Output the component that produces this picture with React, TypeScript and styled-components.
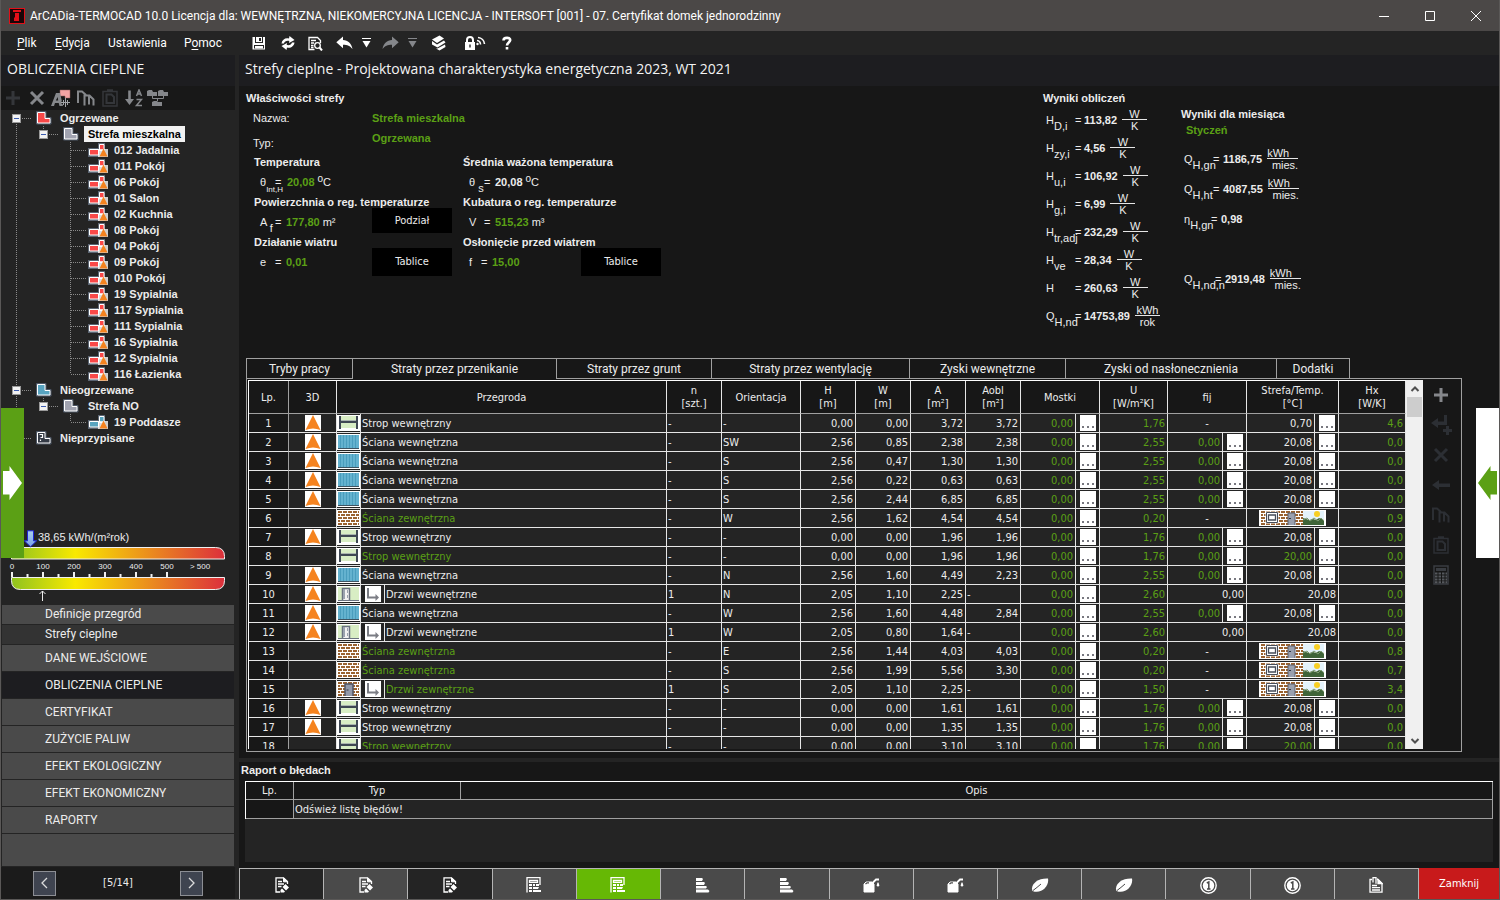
import React from "react";
import styled, { createGlobalStyle, css } from "styled-components";

const arial = `"Liberation Sans", Arial, sans-serif`;
const tahoma = `"DejaVu Sans Condensed", Tahoma, sans-serif`;
const segoe = `"Open Sans", "Segoe UI", sans-serif`;
const ui = `Roboto, "Segoe UI", sans-serif`;

const green = "#5ba015";
const textColor = "#ececec";
const line = "#a0a0a0";
const strong = "#e6e6e6";

const GlobalStyle = createGlobalStyle`
  *, *::before, *::after { box-sizing: border-box; }
  html, body { margin: 0; background: #242424; }
  body { font: 11px/16px ${arial}; color: ${textColor}; overflow: hidden; }
  button { font: inherit; color: inherit; background: none; border: 0; padding: 0; margin: 0; cursor: pointer; }
  svg { display: block; flex: none; }
`;

/* ---------- window frame ---------- */

const Window = styled.div`
  position: relative;
  display: flex;
  flex-direction: column;
  height: 100vh;
  border: 1px solid #5a5857;
  border-top: 0;
  background: #242424;
`;

const TitleBar = styled.header`
  display: flex;
  align-items: center;
  height: 31px;
  flex: none;
  padding-left: 8px;
  background: #4b4847;
  color: #fff;
  font: 12px/16px ${ui};
`;

const TitleText = styled.h1`
  margin: 0 auto 0 5px;
  font: inherit;
  white-space: nowrap;
`;

const CaptionButton = styled.button`
  display: grid;
  place-items: center;
  width: 46px;
  height: 31px;
`;

const MenuBar = styled.nav`
  display: flex;
  align-items: center;
  height: 24px;
  flex: none;
  padding-left: 16px;
  color: #fff;
  font: 12px/16px ${ui};
`;

const MenuItem = styled.button<{ $w: number }>`
  width: ${(p) => p.$w}px;
  text-align: left;
  u { text-underline-offset: 2px; }
`;

const IconButton = styled.button<{ $w?: number; $h?: number }>`
  display: grid;
  place-items: center;
  width: ${(p) => p.$w ?? 24}px;
  height: ${(p) => p.$h ?? 24}px;
`;

const Body = styled.div`
  display: flex;
  flex: 1;
  min-height: 0;
`;

const PanelHeading = styled.h2`
  height: 31px;
  flex: none;
  margin: 0;
  padding-left: 6px;
  background: #1d1d20;
  color: #f4f4f4;
  font: 14px/28px ${segoe};
  white-space: nowrap;
`;

/* ---------- sidebar ---------- */

const Sidebar = styled.aside`
  display: flex;
  flex-direction: column;
  width: 238px;
  flex: none;
  padding-right: 4px;
`;

const TreeTools = styled.div`
  display: flex;
  align-items: center;
  height: 24px;
  flex: none;
  background: #181818;
`;

const Tree = styled.ul`
  flex: 1;
  min-height: 0;
  margin: 0;
  padding: 0;
  list-style: none;
  overflow: hidden;
`;

const TreeRow = styled.li<{ $selected?: boolean }>`
  display: flex;
  align-items: center;
  height: 16px;
  font-weight: bold;
  white-space: nowrap;
  span {
    padding: 0 4px;
    ${(p) => p.$selected && css`background: #f2f2f2; color: #000;`}
  }
`;

const Gap = styled.i<{ $w?: number }>`
  width: ${(p) => p.$w ?? 5}px;
`;

const Gauge = styled.section`
  flex: none;
  height: 75px;
  padding: 0 10px;
  svg { overflow: visible; }
`;

const Nav = styled.nav`
  display: flex;
  flex-direction: column;
  gap: 1px;
  flex: none;
  padding: 0 1px;
`;

const NavLink = styled.a<{ $tone?: "dark" | "dim"; $small?: boolean }>`
  height: ${(p) => (p.$small ? 19 : 26)}px;
  padding-left: 43px;
  background: ${(p) => (p.$tone === "dark" ? "#1d1d20" : p.$tone === "dim" ? "#333333" : "#4a4a4a")};
  color: ${textColor};
  font: 12px/${(p) => (p.$small ? 19 : 26)}px ${ui};
  text-decoration: none;
`;

const NavFill = styled.div`
  height: 32px;
  background: #4a4a4a;
`;

const Pager = styled.div`
  display: flex;
  align-items: center;
  justify-content: space-between;
  height: 32px;
  flex: none;
  margin-top: 1px;
  padding: 0 32px;
  background: #1b1b1b;
  font: 11px/16px ${tahoma};
`;

const PagerButton = styled.button`
  display: grid;
  place-items: center;
  width: 23px;
  height: 25px;
  border: 1px solid #8c8e94;
  background: #3f4450;
`;

/* ---------- main area ---------- */

const Main = styled.main`
  display: flex;
  flex-direction: column;
  flex: 1;
  min-width: 0;
  background: #171717;
`;

const Summary = styled.section`
  display: flex;
  height: 272px;
  flex: none;
`;

const Properties = styled.div`
  flex: 1;
  min-width: 0;
  padding: 4px 0 0 7px;
`;

const SmallHeading = styled.h3`
  margin: 0;
  font: bold 11px/16px ${arial};
  white-space: nowrap;
`;

const PropertyRow = styled.div<{ $last?: boolean }>`
  display: flex;
  align-items: flex-start;
  height: ${(p) => (p.$last ? 20 : 24)}px;
  padding: ${(p) => (p.$last ? 0 : 4)}px 0 0 7px;
`;

const PropertyName = styled.span<{ $low?: boolean }>`
  width: 119px;
  padding-top: ${(p) => (p.$low ? 5 : 0)}px;
`;

const Value = styled.b<{ $green?: boolean }>`
  color: ${(p) => (p.$green ? green : textColor)};
`;

const Quantities = styled.div`
  display: grid;
  grid-template-columns: 209px 209px;
  padding: 4px 0 0 8px;
`;

const Quantity = styled.div`
  height: 40px;
`;

const Formula = styled.div`
  display: flex;
  align-items: center;
  height: 24px;
  padding-left: 6px;
  white-space: nowrap;
  sup { font-size: 10px; line-height: 0; vertical-align: 4px; }
`;

const Symbol = styled.span<{ $w: number; $fine?: boolean }>`
  width: ${(p) => p.$w}px;
  flex: none;
  white-space: nowrap;
  sub { font-size: ${(p) => (p.$fine ? 8 : 11)}px; line-height: 0; vertical-align: -6px; }
`;

const Equals = styled.span<{ $w?: number }>`
  width: ${(p) => p.$w ?? 11}px;
  flex: none;
`;

const Unit = styled.span`
  margin-left: 3px;
`;

const BlackButton = styled.button<{ $h: number }>`
  align-self: flex-start;
  width: 80px;
  height: ${(p) => p.$h}px;
  margin: -2px 11px 0 auto;
  background: #000;
  font: 11px/16px ${tahoma};
`;

const Results = styled.div`
  display: flex;
  width: 456px;
  flex: none;
  padding-top: 4px;
`;

const ResultColumn = styled.div<{ $w: number; $top?: number }>`
  width: ${(p) => p.$w}px;
  padding-top: ${(p) => p.$top ?? 0}px;
`;

const ResultRow = styled.div<{ $h: number }>`
  display: flex;
  align-items: center;
  height: ${(p) => p.$h}px;
  padding-left: 3px;
  white-space: nowrap;
`;

const MonthName = styled.div`
  height: 22px;
  padding-left: 5px;
`;

const Fraction = styled.span<{ $w: number; $spread?: boolean }>`
  display: flex;
  flex-direction: column;
  width: ${(p) => p.$w}px;
  margin-left: 5px;
  line-height: 12px;
  text-align: center;
  span:first-child {
    border-bottom: 1px solid ${strong};
    line-height: 10px;
    ${(p) => p.$spread && css`text-align: left;`}
  }
  span:last-child { ${(p) => p.$spread && css`text-align: right;`} }
`;

/* ---------- tabs and data table ---------- */

const Tabs = styled.div`
  display: flex;
  height: 20px;
  flex: none;
  margin: 0 37px 0 7px;
`;

const Tab = styled.button<{ $w: number; $active?: boolean }>`
  width: ${(p) => p.$w}px;
  border: 1px solid ${line};
  border-width: 1px 1px 0 0;
  font: 12px/18px ${ui};
  &:first-child { border-left-width: 1px; }
  ${(p) =>
    p.$active &&
    css`
      height: 21px;
      position: relative;
      background: #171717;
    `}
`;

const TabPanel = styled.section`
  display: flex;
  flex: 1;
  min-height: 0;
  margin: 0 37px 6px 7px;
  padding: 1px 0 2px 1px;
  border: 1px solid ${line};
`;

const TableFrame = styled.div`
  flex: 1;
  min-width: 0;
  overflow: hidden;
  border: 1px solid #fff;
  border-width: 1px 0 0 1px;
`;

const DataTable = styled.table`
  width: 100%;
  table-layout: fixed;
  border-collapse: separate;
  border-spacing: 0;
  background: #242424;
  font: 11px/13px ${tahoma};
  th {
    height: 33px;
    padding: 0;
    border: 1px solid ${strong};
    border-width: 0 1px 1px 0;
    border-bottom-color: ${line};
    background: #171717;
    font-weight: normal;
  }
  td {
    height: 19px;
    padding: 0;
    border: 1px solid ${strong};
    border-width: 0 1px 1px 0;
    white-space: nowrap;
  }
  tr > :first-child {
    border-right-color: ${line};
    background: #181818;
    text-align: center;
  }
`;

const Cell = styled.div<{ $align?: "left" | "right" | "center"; $green?: boolean }>`
  display: flex;
  height: 18px;
  align-items: center;
  justify-content: ${(p) => (p.$align === "right" ? "flex-end" : p.$align === "center" ? "center" : "flex-start")};
  padding: 0 ${(p) => (p.$align === "right" ? 2 : 0)}px 0 ${(p) => (p.$align ? 0 : 1)}px;
  color: ${(p) => (p.$green ? green : textColor)};
`;

const Split = styled.div`
  display: flex;
  height: 18px;
  & > ${Cell} { flex: 1; min-width: 0; border-right: 1px solid ${strong}; }
`;

const NameSplit = styled.div`
  display: flex;
  height: 18px;
`;

const IconBox = styled.div`
  display: grid;
  place-items: center;
  width: 24px;
  height: 18px;
  flex: none;
  border-right: 1px solid ${strong};
`;

const MoreBox = styled.div`
  display: grid;
  place-items: center;
  width: 23px;
  height: 18px;
`;

const MoreButton = styled.button`
  display: flex;
  align-items: flex-end;
  justify-content: center;
  gap: 3px;
  width: 16px;
  height: 16px;
  padding-bottom: 3px;
  background: #fff;
  i { width: 2px; height: 2px; background: #77777f; }
`;

const ScrollTrack = styled.div`
  display: flex;
  flex-direction: column;
  align-items: center;
  width: 17px;
  flex: none;
  background: #f0f0f0;
`;

const ScrollButton = styled.button`
  display: grid;
  place-items: center;
  width: 17px;
  height: 17px;
`;

const ScrollThumb = styled.div`
  width: 15px;
  height: 20px;
  margin-bottom: auto;
  background: #cdcdcd;
`;

const SideTools = styled.div`
  display: flex;
  flex-direction: column;
  align-items: center;
  width: 38px;
  flex: none;
  padding-right: 2px;
`;

/* ---------- error report ---------- */

const Report = styled.section`
  flex: none;
  height: 110px;
  border-top: 4px solid #242424;
  padding: 0 6px 6px 2px;
`;

const ReportFrame = styled.div`
  height: 81px;
  margin: 3px 0 0 4px;
  background: #242424;
`;

const ReportTable = styled.table`
  width: 100%;
  table-layout: fixed;
  border-collapse: separate;
  border-spacing: 0;
  border: 1px solid #fff;
  border-width: 1px 0 0 1px;
  font: 11px/14px ${tahoma};
  th, td {
    height: 18px;
    padding: 0 1px;
    border: 1px solid ${line};
    border-width: 0 1px 1px 0;
    font-weight: normal;
    text-align: left;
  }
  td { height: 19px; padding-top: 2px; }
  th { background: #171717; text-align: center; }
  tr > :first-child { background: #171717; }
`;

/* ---------- footer buttons ---------- */

const Footer = styled.footer`
  display: flex;
  height: 31px;
  flex: none;
  border-left: 1px solid #b4b4b4;
`;

const FooterButton = styled.button<{ $bg?: string }>`
  display: grid;
  place-items: center;
  flex: 1;
  border: 1px solid #b4b4b4;
  border-width: 1px 1px 0 0;
  background: ${(p) => p.$bg ?? "#4a4a4a"};
  padding-top: 2px;
`;

const CloseButton = styled.button`
  width: 80px;
  flex: none;
  background: #c81a1b;
  color: #fff;
  font: 11px/16px ${tahoma};
`;

/* ---------- slide-out handles over the page ---------- */

const Handle = styled.button<{ $side: "left" | "right" }>`
  position: absolute;
  top: 408px;
  ${(p) => p.$side}: 0;
  display: grid;
  place-items: center;
  width: 23px;
  height: 150px;
  background: ${(p) => (p.$side === "left" ? green : "#fff")};
`;

/* ---------- drawings ---------- */

type S = { color?: string };

const ZoneIcon = ({ fill }: { fill: string }) => (
  <svg width="16" height="16" viewBox="0 0 16 16">
    <path d="M.5 1.500h9.500v6h5v6.500h-14.500z" fill="#4c5665" stroke="#4c5665" />
    <path d="M1.500 2.500h7.500v6h5v4.500h-12.500z" fill={fill} stroke="#fff" />
  </svg>
);

const UnknownIcon = () => (
  <svg width="16" height="16" viewBox="0 0 16 16">
    <path d="M.5 1.500h9.500v6h5v6.500h-14.500z" fill="#3c434f" stroke="#4c5665" />
    <path d="M1.500 2.500h7.500v6h5v4.500h-12.500z" fill="#353b46" stroke="#fff" />
    <path d="M3.500 4.500h3v3h-2M4.500 9.500v1.500" fill="none" stroke="#fff" strokeWidth="1.200" />
  </svg>
);

const RoomIcon = ({ fill }: { fill: string }) => (
  <svg width="20" height="16" viewBox="0 0 20 16">
    <path d="M0 6h10V1h7v14H0z" fill="#5a6472" />
    <path d="M1.500 7.500h9v5.500h-9zM11.500 2.500h4.500v6h-4.500z" fill={fill} stroke="#fff" />
    <path d="M10 7h10v8h-10z" fill="#fff" opacity=".78" />
    <path d="M15.500 6.500l4 8h-8z" fill="#f5831f" />
  </svg>
);

const guideLine = { stroke: "#8a8a8a", strokeDasharray: "1 1", fill: "none" } as const;

const Expander = ({ x }: { x: number }) => (
  <g>
    <rect x={x - 3.5} y="4.500" width="8" height="8" fill="#f2f2f2" stroke="#9a9a9a" />
    <path d={`M${x - 2} 8.500h5`} stroke="#3b5bb0" />
  </g>
);

type GuideKind = "root" | "rootMid" | "rootLast" | "zone" | "room" | "roomLast";

const Guides = ({ kind }: { kind: GuideKind }) => {
  const w = kind.startsWith("root") ? 35 : kind === "zone" ? 62 : 87;
  return (
    <svg width={w} height="16" viewBox={`0 0 ${w} 16`}>
      {kind === "root" && <path d="M15.500 12v4M21 8.500h9" {...guideLine} />}
      {kind === "rootMid" && <path d="M15.500 0v16M21 8.500h9" {...guideLine} />}
      {kind === "rootLast" && <path d="M15.500 0v8M15 8.500h15" {...guideLine} />}
      {kind === "zone" && <path d="M15.500 0v16M42.500 0v4M48 8.500h9" {...guideLine} />}
      {kind === "room" && <path d="M15.500 0v16M69.500 0v16M70 8.500h15" {...guideLine} />}
      {kind === "roomLast" && <path d="M15.500 0v16M69.500 0v8M70 8.500h15" {...guideLine} />}
      {(kind === "root" || kind === "rootMid") && <Expander x={15} />}
      {kind === "zone" && <Expander x={42} />}
    </svg>
  );
};

const AppLogo = () => (
  <svg width="16" height="16" viewBox="0 0 16 16">
    <rect x=".5" y=".5" width="15" height="15" fill="#1a0507" stroke="#e20f18" />
    <path d="M4 2h8v2H4zM6 5h4v8H5v-3l1-1z" fill="#e20f18" />
  </svg>
);

const SaveIcon = () => (
  <svg width="14" height="14" viewBox="0 0 14 14">
    <path d="M.5 1h12.500v12.500H.5z" fill="#fff" />
    <path d="M3 1h8v6H3z" fill="#242424" />
    <path d="M4 1h6v5H4z" fill="#fff" />
    <path d="M7 2h2v3H7zM2 9h10v3.500H2z" fill="#242424" />
    <path d="M3 10h8v2.500H3z" fill="#fff" />
  </svg>
);

const RefreshIcon = () => (
  <svg width="16" height="16" viewBox="0 0 16 16" fill="#fff">
    <path d="M1.500 8.500C2 4.500 5.500 2.500 9 3.500l.5-2.500 5 4-5.500 3 .3-2C6.500 5.500 4.500 6.500 4 8.500z" />
    <path d="M14.500 7.500c-.5 4-4 6-7.500 5l-.5 2.500-5-4L7 8l-.3 2c2.800.5 4.800-.5 5.300-2.500z" />
  </svg>
);

const PreviewIcon = () => (
  <svg width="15" height="15" viewBox="0 0 15 15" fill="none" stroke="#fff" strokeWidth="1.300">
    <path d="M6.500 13.500H1V1.500h8.500l3 3V7M3 4.500h5M3 7h3M3 9.500h2.500M3 11.500h2.500" />
    <circle cx="9.500" cy="9.500" r="2.800" />
    <path d="M11.500 11.500l2.500 3" strokeWidth="2" />
  </svg>
);

const UndoIcon = ({ color = "#fff", flip }: S & { flip?: boolean }) => (
  <svg width="17" height="14" viewBox="0 0 17 14" fill={color}>
    <path transform={flip ? "translate(17 0) scale(-1 1)" : undefined} d="M7 .5v3.500c5 .2 8.500 3.500 9.500 9C14 9.800 11.500 8.700 7 8.700v3.500L.3 6.300z" />
  </svg>
);

const DropIcon = ({ color = "#fff" }: S) => (
  <svg width="9" height="12" viewBox="0 0 9 12">
    <path d="M0 1.500h9" stroke={color} />
    <path d="M.5 4h8l-4 6.500z" fill={color} />
  </svg>
);

const LayersIcon = () => (
  <svg width="16" height="16" viewBox="0 0 16 16" fill="#fff">
    <path d="M1 4.500L8.500.5l4.500 3-7 4.500z" />
    <path d="M1 6l5 3.500 7-4 1.500 2L6.500 12.500 1 9.500z" />
    <path d="M5 13.500l3.500 2 6-3.500-.5-2.500-7.500 4z" />
  </svg>
);

const LockIcon = () => (
  <svg width="21" height="14" viewBox="0 0 21 14">
    <path d="M0 6h10v8H0z" fill="#fff" />
    <path d="M2 6V4a3 3 0 016 0v2" fill="none" stroke="#fff" strokeWidth="2" />
    <path d="M4.300 8.500h1.400v3H4.300z" fill="#242424" />
    <path d="M12 4.500a4 4 0 013.500 4M13 1.500a7 7 0 016.500 6.500" fill="none" stroke="#fff" strokeWidth="1.600" />
    <circle cx="12.500" cy="8" r="1.200" fill="#fff" />
  </svg>
);

const HelpIcon = () => (
  <svg width="10" height="14" viewBox="0 0 10 14" fill="none" stroke="#fff" strokeWidth="2.600">
    <path d="M1.500 4.500C1.500 1 8.500 1 8.200 4.200 8 6.500 5 6.500 5 9.500M5 11v2.500" />
  </svg>
);

const PlusIcon = ({ color = "#34363a" }: S) => (
  <svg width="16" height="16" viewBox="0 0 16 16">
    <path d="M8 1v14M1 8h14" stroke={color} strokeWidth="3" />
  </svg>
);

const CrossIcon = ({ color = "#85878b" }: S) => (
  <svg width="16" height="16" viewBox="0 0 16 16">
    <path d="M2 2l12 12M14 2L2 14" stroke={color} strokeWidth="3" />
  </svg>
);

const RenameIcon = () => (
  <svg width="20" height="18" viewBox="0 0 20 18">
    <path d="M9 1h10v8h-5v-2H9z" fill="#f2a3a3" stroke="#8e5d5d" strokeWidth=".5" />
    <path d="M0 17L5 4h4l3 13H8.500l-.8-3H4l-1 3zM4.800 11.500h2.400L6.700 8z" fill="#85878b" />
    <path d="M14.500 9.500v8M10.500 13.500h8" stroke="#181818" strokeWidth="3" />
    <path d="M14.500 9v9M10 13.500h9M12.500 11v5M16.500 11v5" stroke="#a2a4a8" />
  </svg>
);

const CopyIcon = ({ color = "#85878b" }: S) => (
  <svg width="18" height="16" viewBox="0 0 18 16" fill="none" stroke={color} strokeWidth="2">
    <path d="M1 13V1.500h4l4 3.500M7.500 15.500V5.500h5l4 4v6M12 5.500v9" />
  </svg>
);

const PasteIcon = ({ color = "#34363a" }: S) => (
  <svg width="16" height="18" viewBox="0 0 16 18" fill="none" stroke={color}>
    <path d="M1 2.500h14v14.500H1zM5 1h6" strokeWidth="1.500" />
    <path d="M4.500 5.500h5l2.500 2.500v6H4.500z" strokeWidth="2" />
  </svg>
);

const SortIcon = () => (
  <svg width="18" height="18" viewBox="0 0 18 18" fill="none" stroke="#85878b">
    <path d="M4.500 1.500v10" strokeWidth="2.600" />
    <path d="M0 10h9l-4.500 6z" fill="#85878b" stroke="none" />
    <path d="M11.500 7l2.500-6 2.500 6M12.500 5h3M11.500 10.500h5l-5 6h5.500" strokeWidth="1.500" />
  </svg>
);

const GroupIcon = () => (
  <svg width="22" height="18" viewBox="0 0 22 18" fill="#85878b">
    <path d="M0 2l2-1h3l1 2h4v4H0zM11 2l2-1h3l1 2h4v4H11zM5 13l2-1h3l1 1h4v4H5z" />
    <path d="M5.500 7v2.500h11V7M10.500 9.500V12" fill="none" stroke="#85878b" />
  </svg>
);

const ReturnPlusIcon = () => (
  <svg width="21" height="20" viewBox="0 0 21 20" fill="#2c2f34">
    <path d="M0 8l7-5v3.500h6V0h3v10H7v3z" />
    <path d="M15 11h3v3h3v3h-3v3h-3v-3h-3v-3h3z" />
  </svg>
);

const LeftIcon = () => (
  <svg width="18" height="10" viewBox="0 0 18 10" fill="#2c2f34">
    <path d="M0 5l7-5v3.500h11v3.500H7v3z" />
  </svg>
);

const CalcIcon = () => (
  <svg width="16" height="20" viewBox="0 0 16 20">
    <path d="M1 1h14v18H1z" fill="none" stroke="#3a3d42" strokeWidth="1.500" />
    <path d="M3 3h10v3H3z" fill="#3a3d42" />
    <path d="M2 8.500h12M2 11.500h12M2 14.500h12M2 17.200h12" stroke="#55585d" strokeWidth="2" strokeDasharray="2.500 1" />
  </svg>
);

const NorthIcon = () => (
  <svg width="16" height="16" viewBox="0 0 16 16">
    <path d="M0 0h16v16H0z" fill="#fff" />
    <path d="M8 0L15.500 15Q8 12 .5 15z" fill="#f5831f" />
  </svg>
);

const Bricks = ({ w, h, x = 0, y = 0 }: { w: number; h: number; x?: number; y?: number }) => (
  <g transform={`translate(${x} ${y})`}>
    {Array.from({ length: Math.ceil(h / 3) }, (_, i) => (
      <path key={i} d={`M0 ${i * 3 + 1}h${w}`} stroke="#9a6230" strokeWidth="2" strokeDasharray="4 1" strokeDashoffset={i % 2 ? 2 : 0} />
    ))}
  </g>
);

type Kind = "strop" | "wewn" | "zewn" | "drzwiW" | "drzwiZ";

const PartitionIcon = ({ kind }: { kind: Kind }) => (
  <svg width="23" height="16" viewBox="0 0 23 16">
    <path d="M0 0h23v16H0z" fill="#fff" />
    {kind === "strop" && (
      <>
        <path d="M3 1h17v12H3z" fill="#d8edc4" />
        <path d="M3 5.500h17" stroke="#aab4ae" />
        <path d="M3 7h17" stroke="#3f4753" strokeWidth="2" />
        <path d="M3 1v13M20 1v13" stroke="#3f4753" strokeWidth="2" />
      </>
    )}
    {kind === "wewn" && (
      <>
        <path d="M1 1h21v13H1z" fill="#64b2cf" />
        <path d="M3.500 1v13M6.500 1v13M9.500 1v13M12.500 1v13M15.500 1v13M18.500 1v13" stroke="#4a9dbd" />
        <path d="M1 14.500h21" stroke="#3f5563" />
      </>
    )}
    {kind === "zewn" && <Bricks x={1} y={1} w={21} h={14} />}
    {kind === "drzwiW" && (
      <>
        <path d="M1 1h21v13H1z" fill="#d8edc4" />
        <path d="M5.500 14V2.500h7V14" fill="#f2f2f2" stroke="#6a7280" strokeWidth="1.500" />
        <path d="M6 3h2v10H6z" fill="#9aa2ae" />
        <path d="M10.500 4v3M10.500 9v3" stroke="#9aa2ae" />
        <path d="M1 14.500h21" stroke="#6a7280" />
      </>
    )}
    {kind === "drzwiZ" && (
      <>
        <Bricks x={1} y={1} w={21} h={14} />
        <path d="M8 15V3h8v12" fill="#9298a8" stroke="#505666" strokeWidth="1.500" />
        <path d="M9.500 9h2" stroke="#303644" />
      </>
    )}
  </svg>
);

const ChildIcon = () => (
  <svg width="16" height="16" viewBox="0 0 16 16">
    <path d="M0 0h16v16H0z" fill="#fff" />
    <path d="M3 2v9.500h8" fill="none" stroke="#7b7d84" strokeWidth="2" />
    <path d="M10.500 8l3.500 3.500-3.500 3.500z" fill="#7b7d84" />
  </svg>
);

const OutsideIcon = () => (
  <svg width="67" height="16" viewBox="0 0 67 16">
    <path d="M0 0h67v16H0z" fill="#fff" />
    <Bricks x={2} y={1} w={42} h={14} />
    <path d="M44 1h21v8H44z" fill="#e4f3fb" />
    <circle cx="58" cy="4" r="3" fill="#f8cf24" />
    <path d="M44 8l3 1 3 1 4-1 3 1 3-2 5 2v5H44z" fill="#3f6438" />
    <path d="M44 10l4-2 3 3 4-3 4 3 3-3 3 3" fill="none" stroke="#7d9a72" />
    <path d="M6.500 1.500h13v12h-13z" fill="#fff" />
    <path d="M7.500 2.500h11v10h-11z" fill="#fff" stroke="#464c58" />
    <path d="M9.500 5h7v5h-7z" fill="#fff" stroke="#464c58" strokeWidth="1.300" />
    <path d="M29 15V3h7v12" fill="#9aa0ae" stroke="#5b6170" />
    <path d="M30 8.500h2" stroke="#303644" />
  </svg>
);

const EditDocIcon = () => (
  <svg width="14" height="16" viewBox="0 0 14 16">
    <path d="M5 15H1V.8h7.500L12.500 4.500V7" fill="none" stroke="#fff" strokeWidth="1.300" />
    <path d="M8.500.8v4h4z" fill="#fff" stroke="#fff" />
    <path d="M3 4.500h4M3 7h6M3 9.500h3.500" fill="none" stroke="#fff" strokeWidth="1.300" />
    <path d="M10.500 7l3.500 3.500-3 3-3.500-3.500zM7 11.500l3 3-1 1H5.500V13z" fill="#fff" />
  </svg>
);

const SheetIcon = () => (
  <svg width="16" height="16" viewBox="0 0 16 16" fill="#fff">
    <path d="M1 15.500V.7h13V8M3.500 3.500h8v1.800h-8z" fill="none" stroke="#fff" strokeWidth="1.300" />
    <path d="M3 7h3v2H3zM7 7h2v2H7zM10 7h3v2h-3zM3 10h3v2H3zM3 13h3v2H3zM7 10h6l-1 2h-5zM7 13h8v2H7z" />
  </svg>
);

const ClassIcon = () => (
  <svg width="14" height="16" viewBox="0 0 14 16" fill="#fff">
    <path d="M0 1h6l1 1-1 2H0zM0 5h8l1 1-1 2H0zM0 9h10l1 1-1 1.500H0zM0 12.500h12l1.500 1.500-1 1.500H0z" />
  </svg>
);

const FuelIcon = () => (
  <svg width="17" height="15" viewBox="0 0 17 15" fill="#fff">
    <path d="M1 6l2-2h6l2 2v8H1z" strokeLinejoin="round" stroke="#fff" />
    <path d="M2.500 6l1.500-1.200h2" stroke="#4a4a4a" fill="none" strokeWidth="1.300" />
    <path d="M9.500 5l3.500-3.500h3" fill="none" stroke="#fff" strokeWidth="1.800" />
    <path d="M15 4q2.500 4 0 4.500-2.500-.5 0-4.500z" />
  </svg>
);

const LeafIcon = () => (
  <svg width="18" height="16" viewBox="0 0 18 16">
    <path d="M1.500 14C-1 8 6 1 17 1.500c1.500 8-7 16-15.500 12.500z" fill="#fff" />
    <path d="M2 13.500Q6 10.500 10 7" stroke="#4a4a4a" fill="none" />
  </svg>
);

const CoinIcon = () => (
  <svg width="17" height="17" viewBox="0 0 17 17">
    <circle cx="8.500" cy="8.500" r="7.700" fill="none" stroke="#fff" strokeWidth="1.400" />
    <circle cx="8.500" cy="8.500" r="5.700" fill="#fff" />
    <path d="M6.800 6l2-1v7M7 12h3.500" stroke="#4a4a4a" strokeWidth="1.500" fill="none" />
  </svg>
);

const ReportIcon = () => (
  <svg width="14" height="16" viewBox="0 0 14 16" fill="none" stroke="#fff" strokeWidth="1.300">
    <path d="M3 2.500H1V15.200h12V6.500l-4-4H8M3 8.500h5M3 10.700h8M3 13h8" />
    <path d="M4 5.500V.7h3v6" />
    <path d="M9 2.500v4h4z" fill="#fff" />
  </svg>
);

const ArrowHandle = ({ color, flip }: { color: string; flip?: boolean }) => (
  <svg width="19" height="34" viewBox="0 0 19 34">
    <path transform={flip ? "translate(19 0) scale(-1 1)" : undefined} d="M0 5h6.500V0L19 17 6.500 34v-5.500H0z" fill={color} />
  </svg>
);

const Chevron = ({ dir, color = "#dcdcdc" }: { dir: "left" | "right" | "up" | "down"; color?: string }) => {
  const d = { left: "M8 1L3 6l5 5", right: "M4 1l5 5-5 5", up: "M2.500 8L6 4.500 9.500 8", down: "M2.500 4L6 7.500 9.500 4" }[dir];
  return (
    <svg width="12" height="12" viewBox="0 0 12 12">
      <path d={d} fill="none" stroke={color} strokeWidth={dir === "up" || dir === "down" ? 2 : 1.3} />
    </svg>
  );
};

const EnergyScale = () => (
  <svg width="216" height="75" viewBox="0 0 216 75" fontFamily="Liberation Sans, Arial, sans-serif" role="img" aria-label="38,65 kWh/(m²rok)">
    <defs>
      <linearGradient id="scale">
        <stop offset="0" stopColor="#8fc31f" />
        <stop offset=".3" stopColor="#f9e900" />
        <stop offset="1" stopColor="#dc2f3c" />
      </linearGradient>
      <linearGradient id="marker" x2="0" y2="1">
        <stop offset="0" stopColor="#a9d0ee" />
        <stop offset="1" stopColor="#7aa0e8" />
      </linearGradient>
    </defs>
    <path d="M.5 29V25q0-7.500 8-7.500h196q9 0 9 9v2.500z" fill="url(#scale)" stroke="#f0f0f0" />
    <path d="M.5 47.500h213v3q0 9-9 9H9.500q-9 0-9-9z" fill="url(#scale)" stroke="#f0f0f0" />
    <path d="M16.500.8h6v10h3.200l-6.200 6-6.200-6h3.200z" fill="url(#marker)" stroke="#1c24d8" />
    <text x="27" y="11" fontSize="11" fill={textColor}>38,65 kWh/(m²rok)</text>
    <g fontSize="8" fill={textColor} textAnchor="middle">
      {["0", "100", "200", "300", "400", "500", "> 500"].map((t, i) => (
        <text key={t} x={i === 6 ? 189 : 1 + i * 31} y="39">{t}</text>
      ))}
    </g>
    <g stroke="#f0f0f0">
      {Array.from({ length: 11 }, (_, i) => (
        <path key={i} d={`M${1 + i * 15.5} ${i % 2 ? 44 : 42}V47`} strokeWidth="2" />
      ))}
    </g>
    <path d="M31.500 71V61M28.500 64l3-3 3 3" fill="none" stroke={textColor} />
  </svg>
);

/* ---------- data ---------- */

const heated = [
  "012 Jadalnia", "011 Pokój", "06 Pokój", "01 Salon", "02 Kuchnia", "08 Pokój", "04 Pokój", "09 Pokój",
  "010 Pokój", "19 Sypialnia", "117 Sypialnia", "111 Sypialnia", "16 Sypialnia", "12 Sypialnia", "116 Łazienka",
];

const tabs: [string, number][] = [
  ["Tryby pracy", 107], ["Straty przez przenikanie", 204], ["Straty przez grunt", 155], ["Straty przez wentylację", 198],
  ["Zyski wewnętrzne", 156], ["Zyski od nasłonecznienia", 211], ["Dodatki", 73],
];

const columns: [string, string, number | undefined][] = [
  ["Lp.", "", 40], ["3D", "", 48], ["Przegroda", "", undefined], ["n", "[szt.]", 55], ["Orientacja", "", 79], ["H", "[m]", 55],
  ["W", "[m]", 55], ["A", "[m²]", 55], ["Aobl", "[m²]", 55], ["Mostki", "", 79], ["U", "[W/m²K]", 68], ["fij", "", 79],
  ["Strefa/Temp.", "[°C]", 92], ["Hx", "[W/K]", 67],
];

const names: Record<Kind, string> = {
  strop: "Strop wewnętrzny",
  wewn: "Ściana wewnętrzna",
  zewn: "Ściana zewnętrzna",
  drzwiW: "Drzwi wewnętrzne",
  drzwiZ: "Drzwi zewnętrzne",
};

type Row = { k: Kind; d3: boolean; g?: boolean; o: string; h: string; w: string; a: string; ao: string; u: string; t: string; hx: string };

const r = (k: Kind, d3: boolean, o: string, h: string, w: string, a: string, ao: string, u: string, t: string, hx: string, g = false): Row =>
  ({ k, d3, o, h, w, a, ao, u, t, hx, g });

const rows: Row[] = [
  r("strop", true, "-", "0,00", "0,00", "3,72", "3,72", "1,76", "0,70", "4,6"),
  r("wewn", true, "SW", "2,56", "0,85", "2,38", "2,38", "2,55", "20,08", "0,0"),
  r("wewn", true, "S", "2,56", "0,47", "1,30", "1,30", "2,55", "20,08", "0,0"),
  r("wewn", true, "S", "2,56", "0,22", "0,63", "0,63", "2,55", "20,08", "0,0"),
  r("wewn", true, "S", "2,56", "2,44", "6,85", "6,85", "2,55", "20,08", "0,0"),
  r("zewn", false, "W", "2,56", "1,62", "4,54", "4,54", "0,20", "", "0,9", true),
  r("strop", true, "-", "0,00", "0,00", "1,96", "1,96", "1,76", "20,08", "0,0"),
  r("strop", false, "-", "0,00", "0,00", "1,96", "1,96", "1,76", "20,00", "0,0", true),
  r("wewn", true, "N", "2,56", "1,60", "4,49", "2,23", "2,55", "20,08", "0,0"),
  r("drzwiW", true, "N", "2,05", "1,10", "2,25", "-", "2,60", "20,08", "0,0"),
  r("wewn", true, "W", "2,56", "1,60", "4,48", "2,84", "2,55", "20,08", "0,0"),
  r("drzwiW", true, "W", "2,05", "0,80", "1,64", "-", "2,60", "20,08", "0,0"),
  r("zewn", false, "E", "2,56", "1,44", "4,03", "4,03", "0,20", "", "0,8", true),
  r("zewn", false, "S", "2,56", "1,99", "5,56", "3,30", "0,20", "", "0,7", true),
  r("drzwiZ", false, "S", "2,05", "1,10", "2,25", "-", "1,50", "", "3,4", true),
  r("strop", true, "-", "0,00", "0,00", "1,61", "1,61", "1,76", "20,08", "0,0"),
  r("strop", true, "-", "0,00", "0,00", "1,35", "1,35", "1,76", "20,08", "0,0"),
  r("strop", false, "-", "0,00", "0,00", "3,10", "3,10", "1,76", "20,00", "0,0", true),
];

const totals: [string, string, string, string][] = [
  ["H", "D,i", "113,82", "W/K"], ["H", "zy,i", "4,56", "W/K"], ["H", "u,i", "106,92", "W/K"], ["H", "g,i", "6,99", "W/K"],
  ["H", "tr,adj", "232,29", "W/K"], ["H", "ve", "28,34", "W/K"], ["H", "", "260,63", "W/K"], ["Q", "H,nd", "14753,89", "kWh/rok"],
];

const monthly: [string, string, string, string, number][] = [
  ["Q", "H,gn", "1186,75", "kWh/mies.", 29], ["Q", "H,ht", "4087,55", "kWh/mies.", 29],
  ["η", "H,gn", "0,98", "", 27], ["", "", "", "", 29], ["Q", "H,nd,n", "2919,48", "kWh/mies.", 31],
];

const navItems: [string, ("dark" | "dim")?, boolean?][] = [
  ["Definicje przegród", undefined, true], ["Strefy cieplne", "dim", true], ["DANE WEJŚCIOWE"], ["OBLICZENIA CIEPLNE", "dark"],
  ["CERTYFIKAT"], ["ZUŻYCIE PALIW"], ["EFEKT EKOLOGICZNY"], ["EFEKT EKONOMICZNY"], ["RAPORTY"],
];

const footer: [React.FC, string, string?][] = [
  [EditDocIcon, "Dane 1", "#242424"], [EditDocIcon, "Dane 2"], [EditDocIcon, "Dane 3", "#242424"], [SheetIcon, "Obliczenia 1"],
  [SheetIcon, "Obliczenia 2", "#66b805"], [ClassIcon, "Certyfikat 1"], [ClassIcon, "Certyfikat 2"], [FuelIcon, "Paliwa 1"],
  [FuelIcon, "Paliwa 2"], [LeafIcon, "Ekologia 1"], [LeafIcon, "Ekologia 2"], [CoinIcon, "Ekonomia 1"], [CoinIcon, "Ekonomia 2"],
  [ReportIcon, "Raporty"],
];

/* ---------- parts ---------- */

const More = () => (
  <MoreBox>
    <MoreButton aria-label="Więcej"><i /><i /><i /></MoreButton>
  </MoreBox>
);

const Ratio = ({ unit }: { unit: string }) => {
  const [top, bottom] = unit.split("/");
  const month = bottom === "mies.";
  return (
    <Fraction $w={month ? 31 : 25} $spread={month}>
      <span>{top}</span>
      <span>{bottom}</span>
    </Fraction>
  );
};

const TableRow = ({ row, index }: { row: Row; index: number }) => {
  const door = row.k.startsWith("drzwi");
  return (
    <tr>
      <td>{index + 1}</td>
      <td><Cell $align="center">{row.d3 && <NorthIcon />}</Cell></td>
      <td>
        <NameSplit>
          <IconBox><PartitionIcon kind={row.k} /></IconBox>
          {door && <IconBox><ChildIcon /></IconBox>}
          <Cell $green={row.g}>{names[row.k]}</Cell>
        </NameSplit>
      </td>
      <td><Cell>{door ? "1" : "-"}</Cell></td>
      <td><Cell>{row.o}</Cell></td>
      <td><Cell $align="right">{row.h}</Cell></td>
      <td><Cell $align="right">{row.w}</Cell></td>
      <td><Cell $align="right">{row.a}</Cell></td>
      <td><Cell $align={row.ao === "-" ? undefined : "right"}>{row.ao}</Cell></td>
      <td><Split><Cell $align="right" $green>0,00</Cell><More /></Split></td>
      <td><Cell $align="right" $green>{row.u}</Cell></td>
      <td>
        {row.k === "drzwiW" ? (
          <Cell $align="right">0,00</Cell>
        ) : row.t === "" || index === 0 ? (
          <Cell $align="center">-</Cell>
        ) : (
          <Split><Cell $align="right" $green>0,00</Cell><More /></Split>
        )}
      </td>
      <td>
        {row.t === "" ? (
          <Cell $align="center"><OutsideIcon /></Cell>
        ) : door ? (
          <Cell $align="right">{row.t}</Cell>
        ) : (
          <Split><Cell $align="right" $green={row.g}>{row.t}</Cell><More /></Split>
        )}
      </td>
      <td><Cell $align="right" $green>{row.hx}</Cell></td>
    </tr>
  );
};

export default function App() {
  return (
    <Window>
      <GlobalStyle />
      <TitleBar>
        <AppLogo />
        <TitleText>
          ArCADia-TERMOCAD 10.0 Licencja dla: WEWNĘTRZNA, NIEKOMERCYJNA LICENCJA - INTERSOFT [001] - 07. Certyfikat domek jednorodzinny
        </TitleText>
        <CaptionButton aria-label="Minimalizuj"><svg width="10" height="10"><path d="M0 5.500h10" stroke="#fff" /></svg></CaptionButton>
        <CaptionButton aria-label="Maksymalizuj"><svg width="10" height="10"><path d="M.5.5h9v9h-9z" stroke="#fff" fill="none" /></svg></CaptionButton>
        <CaptionButton aria-label="Zamknij okno"><svg width="10" height="10"><path d="M0 0l10 10M10 0L0 10" stroke="#fff" /></svg></CaptionButton>
      </TitleBar>
      <MenuBar>
        <MenuItem $w={38}><u>P</u>lik</MenuItem>
        <MenuItem $w={53}><u>E</u>dycja</MenuItem>
        <MenuItem $w={76}>Ustawienia</MenuItem>
        <MenuItem $w={61}>P<u>o</u>moc</MenuItem>
        <IconButton $w={28} aria-label="Zapisz"><SaveIcon /></IconButton>
        <IconButton $w={29} aria-label="Odśwież"><RefreshIcon /></IconButton>
        <IconButton $w={27} aria-label="Podgląd"><PreviewIcon /></IconButton>
        <IconButton $w={30} aria-label="Cofnij"><UndoIcon /></IconButton>
        <IconButton $w={15} aria-label="Lista cofania"><DropIcon /></IconButton>
        <IconButton $w={32} aria-label="Ponów"><UndoIcon color="#85878b" flip /></IconButton>
        <IconButton $w={13} aria-label="Lista ponawiania"><DropIcon color="#85878b" /></IconButton>
        <IconButton $w={40} aria-label="Warstwy"><LayersIcon /></IconButton>
        <IconButton $w={33} aria-label="Licencja"><LockIcon /></IconButton>
        <IconButton $w={30} aria-label="Pomoc"><HelpIcon /></IconButton>
      </MenuBar>
      <Body>
        <Sidebar>
          <PanelHeading>OBLICZENIA CIEPLNE</PanelHeading>
          <TreeTools>
            <IconButton $w={24} aria-label="Dodaj"><PlusIcon /></IconButton>
            <IconButton $w={24} aria-label="Usuń"><CrossIcon /></IconButton>
            <IconButton $w={24} aria-label="Zmień"><RenameIcon /></IconButton>
            <IconButton $w={25} aria-label="Kopiuj"><CopyIcon /></IconButton>
            <IconButton $w={24} aria-label="Wklej"><PasteIcon /></IconButton>
            <IconButton $w={23} aria-label="Sortuj"><SortIcon /></IconButton>
            <IconButton $w={26} aria-label="Grupuj"><GroupIcon /></IconButton>
          </TreeTools>
          <Tree>
            <TreeRow><Guides kind="root" /><ZoneIcon fill="#f94848" /><Gap $w={4} /><span>Ogrzewane</span></TreeRow>
            <TreeRow $selected><Guides kind="zone" /><ZoneIcon fill="#a1a3b0" /><Gap /><span>Strefa mieszkalna</span></TreeRow>
            {heated.map((name, i) => (
              <TreeRow key={name}>
                <Guides kind={i === heated.length - 1 ? "roomLast" : "room"} /><RoomIcon fill="#f94848" /><Gap $w={2} /><span>{name}</span>
              </TreeRow>
            ))}
            <TreeRow><Guides kind="rootMid" /><ZoneIcon fill="#58a4c0" /><Gap $w={4} /><span>Nieogrzewane</span></TreeRow>
            <TreeRow><Guides kind="zone" /><ZoneIcon fill="#a1a3b0" /><Gap /><span>Strefa NO</span></TreeRow>
            <TreeRow><Guides kind="roomLast" /><RoomIcon fill="#58a4c0" /><Gap $w={2} /><span>19 Poddasze</span></TreeRow>
            <TreeRow><Guides kind="rootLast" /><UnknownIcon /><Gap $w={4} /><span>Nieprzypisane</span></TreeRow>
          </Tree>
          <Gauge><EnergyScale /></Gauge>
          <Nav>
            {navItems.map(([label, tone, small]) => (
              <NavLink key={label} href="#" $tone={tone} $small={small}>{label}</NavLink>
            ))}
            <NavFill />
          </Nav>
          <Pager>
            <PagerButton aria-label="Poprzednia"><Chevron dir="left" /></PagerButton>
            <span>[5/14]</span>
            <PagerButton aria-label="Następna"><Chevron dir="right" /></PagerButton>
          </Pager>
        </Sidebar>
        <Main>
          <PanelHeading>Strefy cieplne - Projektowana charakterystyka energetyczna 2023, WT 2021</PanelHeading>
          <Summary>
            <Properties>
              <SmallHeading>Właściwości strefy</SmallHeading>
              <PropertyRow><PropertyName>Nazwa:</PropertyName><Value $green>Strefa mieszkalna</Value></PropertyRow>
              <PropertyRow $last><PropertyName $low>Typ:</PropertyName><Value $green>Ogrzewana</Value></PropertyRow>
              <Quantities>
                <Quantity>
                  <SmallHeading>Temperatura</SmallHeading>
                  <Formula><Symbol $w={15} $fine>θ<sub>Int,H</sub></Symbol><Equals $w={12}>=</Equals><Value $green>20,08</Value><Unit><sup>o</sup>C</Unit></Formula>
                </Quantity>
                <Quantity>
                  <SmallHeading>Średnia ważona temperatura</SmallHeading>
                  <Formula><Symbol $w={15}>θ <sub>s</sub></Symbol><Equals>=</Equals><Value>20,08</Value><Unit><sup>o</sup>C</Unit></Formula>
                </Quantity>
                <Quantity>
                  <SmallHeading>Powierzchnia o reg. temperaturze</SmallHeading>
                  <Formula><Symbol $w={15}>A <sub>f</sub></Symbol><Equals>=</Equals><Value $green>177,80</Value><Unit>m²</Unit><BlackButton $h={25}>Podział</BlackButton></Formula>
                </Quantity>
                <Quantity>
                  <SmallHeading>Kubatura o reg. temperaturze</SmallHeading>
                  <Formula><Symbol $w={15}>V</Symbol><Equals>=</Equals><Value $green>515,23</Value><Unit>m³</Unit></Formula>
                </Quantity>
                <Quantity>
                  <SmallHeading>Działanie wiatru</SmallHeading>
                  <Formula><Symbol $w={15}>e</Symbol><Equals>=</Equals><Value $green>0,01</Value><BlackButton $h={28}>Tablice</BlackButton></Formula>
                </Quantity>
                <Quantity>
                  <SmallHeading>Osłonięcie przed wiatrem</SmallHeading>
                  <Formula><Symbol $w={12}>f</Symbol><Equals>=</Equals><Value $green>15,00</Value><BlackButton $h={28}>Tablice</BlackButton></Formula>
                </Quantity>
              </Quantities>
            </Properties>
            <Results>
              <ResultColumn $w={138}>
                <SmallHeading>Wyniki obliczeń</SmallHeading>
                {totals.map(([s, sub, v, unit], i) => (
                  <ResultRow key={i} $h={28}>
                    <Symbol $w={29}>{s}<sub>{sub}</sub></Symbol><Equals $w={9}>=</Equals><Value>{v}</Value><Ratio unit={unit} />
                  </ResultRow>
                ))}
              </ResultColumn>
              <ResultColumn $w={318} $top={16}>
                <SmallHeading>Wyniki dla miesiąca</SmallHeading>
                <MonthName><Value $green>Styczeń</Value></MonthName>
                {monthly.map(([s, sub, v, unit, symbolWidth], i) => (
                  <ResultRow key={i} $h={30}>
                    {s && <><Symbol $w={symbolWidth}>{s}<sub>{sub}</sub></Symbol><Equals $w={10}>=</Equals><Value>{v}</Value></>}
                    {unit && <Ratio unit={unit} />}
                  </ResultRow>
                ))}
              </ResultColumn>
            </Results>
          </Summary>
          <Tabs role="tablist">
            {tabs.map(([label, w], i) => (
              <Tab key={label} role="tab" aria-selected={i === 1} $w={w} $active={i === 1}>{label}</Tab>
            ))}
          </Tabs>
          <TabPanel role="tabpanel">
            <TableFrame>
              <DataTable>
                <colgroup>{columns.map(([label, , w]) => <col key={label} width={w} />)}</colgroup>
                <thead>
                  <tr>{columns.map(([label, unit]) => <th key={label} scope="col">{label}{unit && <><br />{unit}</>}</th>)}</tr>
                </thead>
                <tbody>{rows.map((row, i) => <TableRow key={i} row={row} index={i} />)}</tbody>
              </DataTable>
            </TableFrame>
            <ScrollTrack>
              <ScrollButton aria-label="W górę"><Chevron dir="up" color="#505050" /></ScrollButton>
              <ScrollThumb />
              <ScrollButton aria-label="W dół"><Chevron dir="down" color="#505050" /></ScrollButton>
            </ScrollTrack>
            <SideTools>
              <IconButton $h={30} aria-label="Dodaj wiersz"><PlusIcon color="#85878b" /></IconButton>
              <IconButton $h={30} aria-label="Wstaw wiersz"><ReturnPlusIcon /></IconButton>
              <IconButton $h={30} aria-label="Usuń wiersz"><CrossIcon color="#2c2f34" /></IconButton>
              <IconButton $h={30} aria-label="Wstecz"><LeftIcon /></IconButton>
              <IconButton $h={30} aria-label="Kopiuj wiersz"><CopyIcon color="#2c2f34" /></IconButton>
              <IconButton $h={30} aria-label="Wklej wiersz"><PasteIcon color="#2c2f34" /></IconButton>
              <IconButton $h={30} aria-label="Kalkulator"><CalcIcon /></IconButton>
            </SideTools>
          </TabPanel>
          <Report>
            <SmallHeading>Raport o błędach</SmallHeading>
            <ReportFrame>
              <ReportTable>
                <colgroup><col width={48} /><col width={167} /><col /></colgroup>
                <thead><tr><th scope="col">Lp.</th><th scope="col">Typ</th><th scope="col">Opis</th></tr></thead>
                <tbody><tr><td /><td colSpan={2}>Odśwież listę błędów!</td></tr></tbody>
              </ReportTable>
            </ReportFrame>
          </Report>
          <Footer>
            {footer.map(([Icon, label, bg]) => (
              <FooterButton key={label} aria-label={label} $bg={bg}><Icon /></FooterButton>
            ))}
            <CloseButton>Zamknij</CloseButton>
          </Footer>
        </Main>
      </Body>
      <Handle $side="left" aria-label="Wysuń lewy panel"><ArrowHandle color="#fff" /></Handle>
      <Handle $side="right" aria-label="Wysuń prawy panel"><ArrowHandle color={green} flip /></Handle>
    </Window>
  );
}
